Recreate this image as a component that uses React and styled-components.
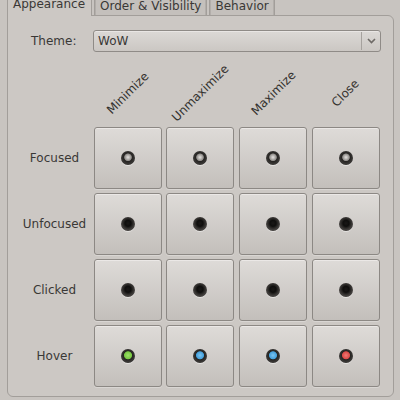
import React from "react";
import styled, { createGlobalStyle } from "styled-components";

const Global = createGlobalStyle`
  html, body { margin: 0; padding: 0; background: #c8c4c0; }
  body { font-family: "DejaVu Sans", "Liberation Sans", sans-serif; font-size: 12px; color: #3a3836; }
`;

const Window = styled.div`
  width: 400px;
  height: 400px;
  overflow: hidden;
  background: #c8c4c0;
  display: flex;
  flex-direction: column;
`;

const TabBar = styled.div`
  display: flex;
  align-items: flex-end;
  gap: 2px;
  height: 23px;
  margin-top: -8px;
  padding-left: 7px;
`;

const Tab = styled.div`
  box-sizing: border-box;
  height: ${(p) => (p.$active ? 24 : 23)}px;
  margin-bottom: ${(p) => (p.$active ? -1 : 0)}px;
  padding: ${(p) => (p.$active ? "4px 6px 0 5px" : "6px 5px 0 5px")};
  line-height: 14px;
  border: 1px solid #a29e9a;
  border-bottom: none;
  border-radius: 4px 4px 0 0;
  background: ${(p) => (p.$active ? "#ccc8c4" : "#c4c0bc")};
  color: #3a3836;
  position: relative;
  z-index: ${(p) => (p.$active ? 1 : 0)};
  box-shadow: ${(p) => (p.$active ? "none" : "inset 1px 0 0 #b2aeaa, inset -1px 0 0 #b2aeaa")};
  white-space: nowrap;
`;

const Panel = styled.div`
  box-sizing: border-box;
  margin-left: 7px;
  width: 387px;
  height: 382px;
  border: 1px solid #a29e9a;
  border-radius: 0 6px 6px 6px;
  background: #ccc8c4;
  padding: 14px 12px 0 12px;
  display: flex;
  flex-direction: column;
`;

const ThemeRow = styled.div`
  display: flex;
  align-items: center;
  height: 22px;
`;

const ThemeLabel = styled.span`
  width: 62px;
  padding-left: 11px;
  color: #3a3836;
`;

const Combo = styled.div`
  box-sizing: border-box;
  flex: 1;
  height: 22px;
  border: 1px solid #8f8b87;
  border-radius: 3px;
  background: linear-gradient(#dcd9d6, #cbc7c3);
  box-shadow: inset 0 1px 0 #e9e6e4;
  display: flex;
  align-items: center;
`;

const ComboText = styled.span`
  flex: 1;
  padding-left: 4px;
  color: #3a3836;
`;

const ComboButton = styled.span`
  width: 18px;
  height: 18px;
  border-left: 1px solid #a6a29e;
  display: flex;
  align-items: center;
  justify-content: center;
`;

const Grid = styled.div`
  margin-top: 4px;
  display: grid;
  grid-template-columns: 69px repeat(4, 68px);
  grid-template-rows: 67px repeat(4, 62px);
  column-gap: 4.7px;
  row-gap: 4px;
`;

const HeaderCell = styled.div`
  min-width: 0;
  display: flex;
  align-items: center;
  justify-content: center;
  padding-top: 7px;
`;

const HeaderText = styled.span`
  display: inline-block;
  transform: rotate(-45deg);
  white-space: nowrap;
  color: #34322f;
`;

const RowLabel = styled.div`
  display: flex;
  align-items: center;
  justify-content: center;
  color: #3a3836;
  white-space: nowrap;
`;

const StateButton = styled.div`
  box-sizing: border-box;
  border: 1px solid #8c8884;
  border-radius: 3px;
  background: linear-gradient(#dedbd8, #c3bfbb);
  box-shadow: inset 0 1px 0 #ebe8e6, 0 1px 0 rgba(255,255,255,0.25);
  display: flex;
  align-items: center;
  justify-content: center;
`;

const dotFill = {
  focused:
    "radial-gradient(circle at 50% 45%, #e4e1df 0, #b9b6b3 1.8px, #8d8a87 3.4px, #262422 4.2px, #383634 6.5px)",
  dark:
    "radial-gradient(circle at 50% 45%, #1a1817 0, #0f0e0d 3px, #282624 4.6px, #423f3d 6.5px)",
  green:
    "radial-gradient(circle at 50% 45%, #9ee06a 0, #78c842 3.6px, #262422 4.4px, #383634 6.5px)",
  blue:
    "radial-gradient(circle at 50% 45%, #7cc4ef 0, #45a0dc 3.6px, #262422 4.4px, #383634 6.5px)",
  red:
    "radial-gradient(circle at 50% 45%, #f07a74 0, #dc4a48 3.6px, #262422 4.4px, #383634 6.5px)",
};

const Dot = styled.span`
  width: 14px;
  height: 14px;
  border-radius: 50%;
  background: ${(p) => dotFill[p.$kind]};
  box-shadow: 0 1px 0 rgba(255, 255, 255, 0.45);
`;

const columns = ["Minimize", "Unmaximize", "Maximize", "Close"];
const rows = [
  { label: "Focused", dots: ["focused", "focused", "focused", "focused"] },
  { label: "Unfocused", dots: ["dark", "dark", "dark", "dark"] },
  { label: "Clicked", dots: ["dark", "dark", "dark", "dark"] },
  { label: "Hover", dots: ["green", "blue", "blue", "red"] },
];

function Chevron() {
  return (
    <svg width="9" height="6" viewBox="0 0 9 6">
      <path d="M1 1 L4.5 4.5 L8 1" fill="none" stroke="#6e6a66" strokeWidth="1.6" />
    </svg>
  );
}

export default function App() {
  return (
    <Window>
      <Global />
      <TabBar>
        <Tab $active>Appearance</Tab>
        <Tab>Order &amp; Visibility</Tab>
        <Tab>Behavior</Tab>
      </TabBar>
      <Panel>
        <ThemeRow>
          <ThemeLabel>Theme:</ThemeLabel>
          <Combo>
            <ComboText>WoW</ComboText>
            <ComboButton>
              <Chevron />
            </ComboButton>
          </Combo>
        </ThemeRow>
        <Grid>
          <div />
          {columns.map((c) => (
            <HeaderCell key={c}>
              <HeaderText>{c}</HeaderText>
            </HeaderCell>
          ))}
          {rows.map((r) => (
            <React.Fragment key={r.label}>
              <RowLabel>{r.label}</RowLabel>
              {r.dots.map((d, i) => (
                <StateButton key={i}>
                  <Dot $kind={d} />
                </StateButton>
              ))}
            </React.Fragment>
          ))}
        </Grid>
      </Panel>
    </Window>
  );
}
